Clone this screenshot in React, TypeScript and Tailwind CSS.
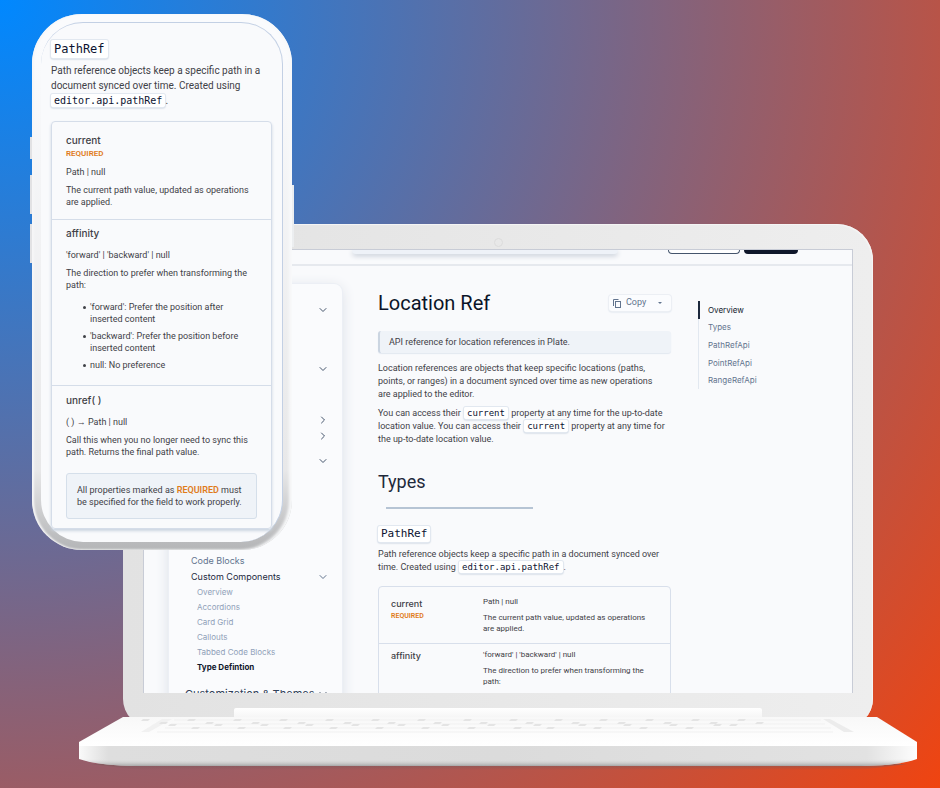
import { ChevronDown, ChevronRight } from "lucide-react";
import type { ReactNode } from "react";

const sans = "font-['Roboto',sans-serif]";
const small = "font-['Inter',sans-serif]";
const mono = "font-['DejaVu_Sans_Mono',monospace]";
const bullet =
  "flex gap-[4px] before:mt-[5px] before:size-[3px] before:shrink-0 before:rounded-full before:bg-current before:content-['']";

function Code({ children, className = "mx-px text-[9px] leading-none" }: { children: ReactNode; className?: string }) {
  return (
    <code
      className={`${mono} ${className} rounded-[2px] bg-white px-[3px] py-px text-[#0b1230] shadow-[0_0_0_1px_#e2e8f0,0_1px_2px_#a3b1c6]`}
    >
      {children}
    </code>
  );
}

function Required({ className = "" }: { className?: string }) {
  return <span className={`font-semibold text-[#e07b1a] ${className}`}>REQUIRED</span>;
}

function Phone() {
  return (
    <section className="absolute top-[14px] left-[32px] w-[260px]" aria-label="Mobile preview">
      <span className="absolute top-[123px] -left-[2px] h-[22px] w-[3px] bg-[#e2e2e4]" />
      <span className="absolute top-[161px] -left-[2px] h-[39px] w-[3px] bg-[#e2e2e4]" />
      <span className="absolute top-[210px] -left-[2px] h-[39px] w-[3px] bg-[#e2e2e4]" />
      <span className="absolute top-[171px] -right-[2px] h-[62px] w-[3px] bg-[#eceef0]" />
      <div className="relative rounded-[50px] bg-linear-to-b from-[#fafbfd] from-5% via-[#e8e8e9] via-85% to-[#b4b5b7] px-[9px] py-[8px] shadow-[inset_2px_0_2px_#f6f6f7,inset_-3px_0_3px_#f8f9fa]">
        <div className="rounded-[42px] border-t border-r border-[#c3d0e4] bg-[#f9fafc] px-[10px] pt-[16px] pb-[13px] text-[#3f4147]">
          <h2 className="flex h-[19px] items-center">
            <Code className="text-[12px] leading-[16px]">PathRef</Code>
          </h2>
          <p className="mt-[5px] text-[10px] leading-[15px] whitespace-nowrap">
            Path reference objects keep a specific path in a
            <br />
            document synced over time. Created using
            <br />
            <Code className="text-[10px] leading-none">editor.api.pathRef</Code>.
          </p>
          <div className="mt-[13px] rounded-[4px] border border-[#d5dde9] text-[9px] leading-[12px] whitespace-nowrap shadow-[0_2px_3px_#cbd5e1]">
            <div className="h-[98px] border-b border-[#d5dde9] px-[14px] pt-[10px]">
              <h3 className={`${small} text-[10px] leading-[16px] font-medium`}>current</h3>
              <Required className="block text-[8px] leading-[12px]" />
              <p className="mt-[6px]">Path | null</p>
              <p className="mt-[6px]">
                The current path value, updated as operations
                <br />
                are applied.
              </p>
            </div>
            <div className="h-[166px] border-b border-[#d5dde9] px-[14px] pt-[5px]">
              <h3 className={`${small} text-[10px] leading-[16px] font-medium`}>affinity</h3>
              <p className="mt-[8px]">'forward' | 'backward' | null</p>
              <p className="mt-[6px]">
                The direction to prefer when transforming the
                <br />
                path:
              </p>
              <ul className="mt-[10px] space-y-[5px] pl-[17px]">
                <li className={bullet}>
                  <div>
                    'forward': Prefer the position after
                    <br />
                    inserted content
                  </div>
                </li>
                <li className={bullet}>
                  <div>
                    'backward': Prefer the position before
                    <br />
                    inserted content
                  </div>
                </li>
                <li className={bullet}>
                  <div>null: No preference</div>
                </li>
              </ul>
            </div>
            <div className="px-[14px] pt-[6px] pb-[9px]">
              <h3 className={`${small} text-[10px] leading-[16px] font-medium`}>unref( )</h3>
              <p className="mt-[8px]">( ) → Path | null</p>
              <p className="mt-[6px]">
                Call this when you no longer need to sync this
                <br />
                path. Returns the final path value.
              </p>
              <p className="mt-[15px] rounded-[3px] border border-[#d5dfea] bg-[#eff3f8] px-[10px] py-[10px]">
                All properties marked as <Required /> must
                <br />
                be specified for the field to work properly.
              </p>
            </div>
          </div>
        </div>
      </div>
    </section>
  );
}

function Toggle({ label, right = false, className = "" }: { label: string; right?: boolean; className?: string }) {
  const Icon = right ? ChevronRight : ChevronDown;
  return (
    <button aria-label={label} className={`flex h-[16px] items-center justify-end text-slate-600 ${className}`}>
      <Icon size={12} strokeWidth={2} />
    </button>
  );
}

function Sidebar() {
  const pages = ["Overview", "Accordions", "Card Grid", "Callouts", "Tabbed Code Blocks"];
  return (
    <nav
      className={`${small} mt-[18px] flex h-[460px] w-[173px] shrink-0 flex-col rounded-[8px] bg-[#fafbfd] pt-[18px] pr-[13px] pl-[16px] whitespace-nowrap shadow-[0_0_0_1px_#eceff5,0_3px_14px_#d9dde5]`}
    >
      <Toggle label="Getting started" />
      <Toggle label="Guides" className="mt-[43px]" />
      <Toggle label="Elements" right className="mt-[35px]" />
      <Toggle label="Marks" right />
      <Toggle label="Components" className="mt-[9px]" />
      <a href="#code-blocks" className="mt-[84px] pl-[6px] text-[9px] leading-[16px] text-slate-500">
        Code Blocks
      </a>
      <button className="flex h-[16px] items-center justify-between pl-[6px] text-[9px] text-slate-800">
        Custom Components
        <ChevronDown size={12} className="text-slate-500" />
      </button>
      {pages.map((page) => (
        <a key={page} href="#page" className="pl-[12px] text-[8px] leading-[15px] text-slate-400">
          {page}
        </a>
      ))}
      <a href="#type" className="pl-[12px] text-[8px] leading-[15px] font-bold text-slate-900">
        Type Defintion
      </a>
      <button className="mt-[10px] flex h-[18px] items-center justify-between text-[11px] text-slate-700">
        Customization &amp; Themes
        <ChevronDown size={12} />
      </button>
    </nav>
  );
}

function Article() {
  return (
    <article className="ml-[36px] min-w-0 flex-1 whitespace-nowrap text-[#3f4147]">
      <div className="mt-[25px] flex h-[24px] items-center justify-between">
        <h1 className="text-[20px] leading-[24px] text-[#0b1428]">Location Ref</h1>
        <button className="flex h-[16px] w-[62px] items-center rounded-[3px] bg-[#fbfcfe] pl-[4px] text-[9px] text-slate-500 shadow-[0_0_0_1px_#eceff4,0_1px_2px_#cbd5e1]">
          <svg width="8" height="9" viewBox="0 0 8 9" fill="none" stroke="currentColor" strokeWidth="1">
            <path d="M0.5 7V0.5H5.5" />
            <rect x="2.5" y="2.5" width="5" height="6" />
          </svg>
          <span className="ml-[5px]">Copy</span>
          <svg className="ml-[12px]" width="4" height="2" viewBox="0 0 4 2" fill="currentColor">
            <path d="M0 0h4L2 2z" />
          </svg>
        </button>
      </div>
      <p className="mt-[16px] rounded-[3px] border-l-2 border-[#cbd5e1] bg-[#eff3f8] pl-[9px] text-[9px] leading-[22px] shadow-[0_1px_1px_#e2e8f0]">
        API reference for location references in Plate.
      </p>
      <p className="mt-[9px] text-[9px] leading-[13px]">
        Location references are objects that keep specific locations (paths,
        <br />
        points, or ranges) in a document synced over time as new operations
        <br />
        are applied to the editor.
      </p>
      <p className="mt-[6px] text-[9px] leading-[13px]">
        You can access their <Code>current</Code> property at any time for the up-to-date
        <br />
        location value. You can access their <Code>current</Code> property at any time for
        <br />
        the up-to-date location value.
      </p>
      <h2 className="mt-[26px] text-[18px] leading-[20px] text-[#1e293b]">Types</h2>
      <hr className="mt-[15px] ml-[8px] w-1/2 border-t-2 border-[#b6c4d4]" />
      <h3 className="mt-[16px] flex h-[17px] items-center">
        <Code className="text-[11px] leading-[14px]">PathRef</Code>
      </h3>
      <p className="mt-[6px] text-[9px] leading-[13px]">
        Path reference objects keep a specific path in a document synced over
        <br />
        time. Created using <Code>editor.api.pathRef</Code>.
      </p>
      <dl className="mt-[12px] rounded-[4px] border border-[#d8dfeb] text-[8px] leading-[11px]">
        <div className="flex h-[57px] border-b border-[#d8dfeb]">
          <dt className="w-[104px] pt-[11px] pl-[12px]">
            <span className={`${small} block text-[9px] leading-[12px] font-medium`}>current</span>
            <Required className="block text-[7px] leading-[12px]" />
          </dt>
          <dd className="pt-[9px]">
            <p>Path | null</p>
            <p className="mt-[5px]">
              The current path value, updated as operations
              <br />
              are applied.
            </p>
          </dd>
        </div>
        <div className="flex h-[60px]">
          <dt className="w-[104px] pt-[6px] pl-[12px]">
            <span className={`${small} block text-[9px] leading-[12px] font-medium`}>affinity</span>
          </dt>
          <dd className="pt-[5px]">
            <p>'forward' | 'backward' | null</p>
            <p className="mt-[5px]">
              The direction to prefer when transforming the
              <br />
              path:
            </p>
          </dd>
        </div>
      </dl>
    </article>
  );
}

function Contents() {
  const rest = ["Types", "PathRefApi", "PointRefApi", "RangeRefApi"];
  return (
    <nav className={`${small} mt-[35px] ml-[27px] flex h-[88px] w-[154px] shrink-0 flex-col text-[8px] text-slate-500`}>
      <a href="#overview" className="flex flex-1 items-center border-l-2 border-slate-800 pl-[8px] text-slate-900">
        Overview
      </a>
      {rest.map((item) => (
        <a key={item} href="#section" className="flex flex-1 items-center border-l border-slate-200 pl-[9px]">
          {item}
        </a>
      ))}
    </nav>
  );
}

const keyRows = [
  { y: 3, x: [62, 108, 154, 200, 246, 292, 338, 384, 430, 475, 520, 566, 612, 658] },
  { y: 6, x: [80, 126, 172, 218, 264, 308, 354, 400, 446, 492, 538, 584, 630, 676] },
  { y: 8, x: [89, 135, 181, 226, 272, 318, 362, 408, 454, 499, 544, 590, 634, 650] },
  { y: 11, x: [112, 158, 204, 250, 296, 342, 388, 434, 467, 514, 560, 606] },
];

function LaptopBase() {
  return (
    <svg className="relative -mt-[11px] block w-full" viewBox="0 0 838 56" aria-hidden="true">
      <defs>
        <linearGradient id="deck" x1="0" y1="0" x2="0" y2="1">
          <stop offset="0" stopColor="#f8f8f8" />
          <stop offset="1" stopColor="#ffffff" />
        </linearGradient>
        <linearGradient id="front" x1="0" y1="0" x2="1" y2="0">
          <stop offset="0" stopColor="#fafafa" />
          <stop offset="0.035" stopColor="#dedede" />
          <stop offset="0.5" stopColor="#dbdbdb" />
          <stop offset="0.94" stopColor="#e2e2e2" />
          <stop offset="1" stopColor="#fdfdfd" />
        </linearGradient>
        <linearGradient id="under" x1="0" y1="0" x2="0" y2="1">
          <stop offset="0" stopColor="#e0e0e0" stopOpacity="0" />
          <stop offset="1" stopColor="#a6a6a6" />
        </linearGradient>
        <linearGradient id="shade" x1="0" y1="0" x2="0" y2="1">
          <stop offset="0" stopColor="#7b5a5c" stopOpacity="0.7" />
          <stop offset="1" stopColor="#7b5a5c" stopOpacity="0" />
        </linearGradient>
      </defs>
      <path d="M12 48H828L780 54H60Z" fill="url(#shade)" />
      <path d="M0 27H838V43C820 49 800 50 775 50H65C35 50 15 48 0 43Z" fill="url(#front)" />
      <path d="M2 43H836C820 49 800 50 775 50H65C35 50 15 48 2 43Z" fill="url(#under)" />
      <path d="M44 1H798L838 26V30H0V26Z" fill="url(#deck)" />
      <path d="M83 3L62 16H70L93 3Z" fill="#f1f1f1" />
      <path d="M751 3L775 16H765L744 3Z" fill="#ececec" />
      <path d="M95 4H742M92 8H746M86 12H752M78 16H754" stroke="#f1f1f1" strokeWidth="1" />
      {keyRows.map((row) =>
        row.x.map((x) => (
          <path key={`${row.y}-${x}`} d={`M${x + 2} ${row.y}h7l-2 2h-7z`} fill="#e4e4e4" />
        )),
      )}
    </svg>
  );
}

function Laptop() {
  return (
    <section className="w-full" aria-label="Desktop preview">
      <div className="mx-[44px] rounded-t-[36px] rounded-b-[28px] bg-linear-to-r from-[#e2e2e2] to-[#eeeeee] px-[20px] pb-[10px] shadow-[inset_-1px_1px_1px_#f5f5f5]">
        <div className="flex h-[25px] justify-center pt-[14px]">
          <span className="size-[9px] rounded-full border border-[#dcdcdc]" />
        </div>
        <div className="h-[444px] overflow-hidden border-x border-t border-[#c8ccd6] bg-[#f9fafc]">
          <header className="flex h-[16px] items-start border-b-2 border-[#e6e9ee] pr-[54px] pl-[208px]">
            <div className="h-[4px] w-[266px] rounded-b-[8px] bg-[#eef2f8] shadow-[0_2px_5px_#c3cad5]" />
            <button
              aria-label="Sign in"
              className="ml-auto h-[4px] w-[72px] rounded-b-[4px] border border-t-0 border-slate-600 bg-white"
            />
            <button aria-label="Get started" className="ml-[4px] h-[4px] w-[54px] rounded-b-[4px] bg-[#0f172a]" />
          </header>
          <div className="flex pl-[25px]">
            <Sidebar />
            <Article />
            <Contents />
          </div>
        </div>
        <div className="flex h-[24px] items-end px-[91px]">
          <div className="h-[9px] w-full rounded-t-[2px] bg-linear-to-b from-white to-[#f6f6f6]" />
        </div>
      </div>
      <LaptopBase />
    </section>
  );
}

export default function App() {
  return (
    <main
      className={`${sans} relative min-h-screen overflow-hidden bg-radial-[circle_farthest-corner_at_0%_0%] from-[#0088ff] to-[#f04410] pt-[224px] pr-[23px] pl-[79px]`}
    >
      <Laptop />
      <Phone />
    </main>
  );
}
